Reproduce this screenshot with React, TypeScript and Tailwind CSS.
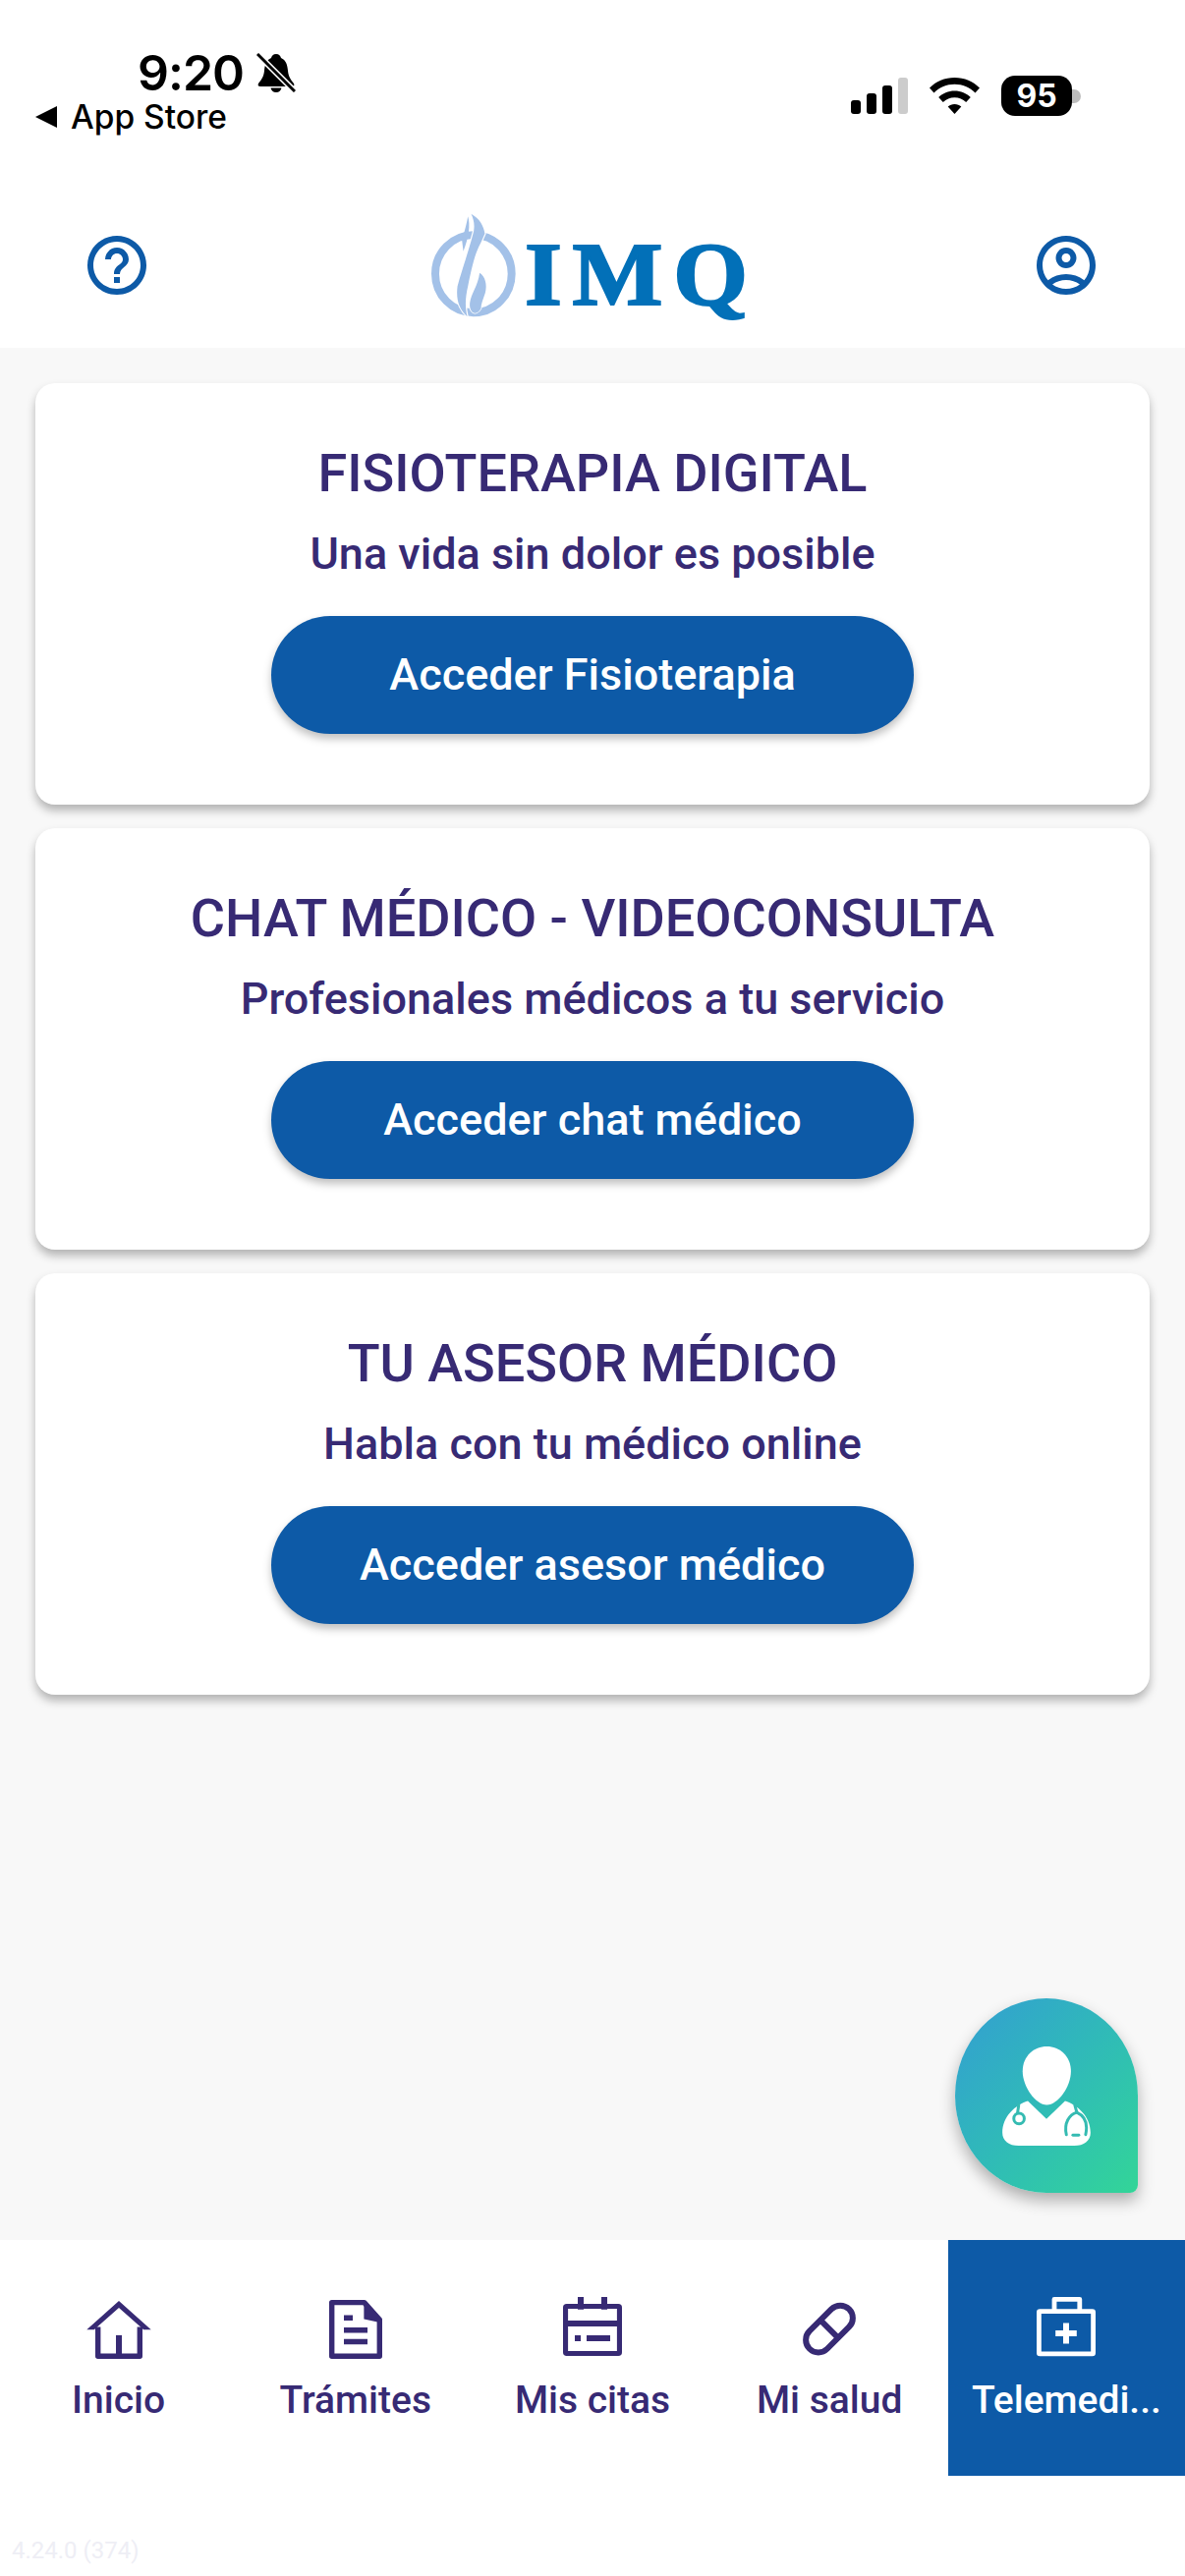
import { MdHelpOutline, MdOutlineAccountCircle } from 'react-icons/md';

const CARDS = [
  { title: 'FISIOTERAPIA DIGITAL', subtitle: 'Una vida sin dolor es posible', action: 'Acceder Fisioterapia' },
  { title: 'CHAT MÉDICO - VIDEOCONSULTA', subtitle: 'Profesionales médicos a tu servicio', action: 'Acceder chat médico' },
  { title: 'TU ASESOR MÉDICO', subtitle: 'Habla con tu médico online', action: 'Acceder asesor médico' },
];

function HomeIcon() {
  return (
    <svg viewBox="0 0 24 24" className="w-[72px] h-[72px]" fill="none" stroke="currentColor" strokeWidth="1.8">
      <path d="M12 2.7 22.9 12.4H20.4L12 5 3.6 12.4H1.1Z" fill="currentColor" stroke="none" />
      <path d="M4.9 11.5V21.4H19.1V11.5" strokeLinejoin="round" />
      <path d="M12 14.3V21" strokeWidth="2" />
    </svg>
  );
}

function DocIcon() {
  return (
    <svg viewBox="0 0 24 24" className="w-[72px] h-[72px]" fill="none" stroke="currentColor" strokeWidth="1.8">
      <path d="M3.9 3.2H14.9L20.1 9V21.4H3.9Z" strokeLinejoin="round" />
      <path d="M14.8 2.6 21 9.1V10.2L14.8 8.8Z" fill="currentColor" stroke="none" />
      <path d="M8 7.5H11V9.3H8ZM8 11.7H16V13.5H8ZM8 15.6H16V17.4H8Z" fill="currentColor" stroke="none" />
    </svg>
  );
}

function CalendarIcon() {
  return (
    <svg viewBox="0 0 24 24" className="w-[72px] h-[72px]" fill="none" stroke="currentColor" strokeWidth="1.7">
      <rect x="2.85" y="4.5" width="18.3" height="16" rx="0.4" />
      <path d="M8 1.3V5.6M16 1.3V5.6" strokeWidth="2" />
      <path d="M2.5 10.3H21.5" strokeWidth="2" />
      <path d="M6 14.3H8V16.3H6ZM10 14.3H18V16.3H10Z" fill="currentColor" stroke="none" />
    </svg>
  );
}

function PillIcon() {
  return (
    <svg viewBox="0 0 24 24" className="w-[72px] h-[72px]" fill="none" stroke="currentColor" strokeWidth="2">
      <rect x="2.5" y="7.95" width="19" height="8.5" rx="4.25" transform="rotate(-45 12 12.2)" />
      <path d="M9 9.2 15 15.2" />
    </svg>
  );
}

function KitIcon() {
  return (
    <svg viewBox="0 0 24 24" className="w-[72px] h-[72px]" fill="none" stroke="currentColor" strokeWidth="1.6">
      <rect x="2.8" y="6.2" width="18.4" height="14.4" rx="0.3" strokeLinejoin="round" />
      <path d="M8 6V2.1H16.6V6" strokeLinejoin="round" />
      <path d="M12 10.2V17.2M8.4 13.7H15.6" strokeWidth="2" />
    </svg>
  );
}

const TABS = [
  { label: 'Inicio', icon: <HomeIcon /> },
  { label: 'Trámites', icon: <DocIcon /> },
  { label: 'Mis citas', icon: <CalendarIcon /> },
  { label: 'Mi salud', icon: <PillIcon /> },
  { label: 'Telemedi...', icon: <KitIcon />, active: true },
];

function ImqMark() {
  return (
    <svg viewBox="110 70 265 330" className="w-[88px] h-[110px] shrink-0">
      <ellipse cx="239" cy="261" rx="117" ry="119" fill="none" stroke="#a3c1e8" strokeWidth="24" />
      <path d="M222 85C230 110 225 150 208 192L204 160C208 140 216 120 222 85Z" fill="#a3c1e8" />
      <path
        d="M232 78C258 92 270 115 274 138L262 165C245 195 235 235 222 300C215 330 212 360 220 392C195 370 185 340 190 300C200 260 225 190 240 130C243 110 240 95 232 78Z"
        fill="#a3c1e8"
        stroke="#ffffff"
        strokeWidth="7"
        paintOrder="stroke"
      />
      <path
        d="M258 258C275 268 282 295 275 320C268 340 262 355 262 368C245 395 225 378 228 350C232 320 252 300 258 258Z"
        fill="#a3c1e8"
        stroke="#ffffff"
        strokeWidth="5"
        paintOrder="stroke"
      />
    </svg>
  );
}

function DoctorIcon() {
  return (
    <svg viewBox="240 216 270 304" className="w-[90px] h-[101px]">
      <path d="M376 216C415 216 450 245 450 292C450 340 410 395 376 395C342 395 302 340 302 292C302 245 337 216 376 216Z" fill="#ffffff" />
      <path d="M318 383 375 438 432 383C470 395 510 430 510 480C510 505 490 520 460 520H290C260 520 240 505 240 480C240 430 280 395 318 383Z" fill="#ffffff" />
      <g fill="none" stroke="#35bbb2" strokeWidth="9" strokeLinecap="round">
        <path d="M290 396 286 422" />
        <circle cx="291" cy="437" r="16" fill="#ffffff" />
        <path d="M462 396 468 418C445 425 428 450 436 486" />
        <path d="M468 418C490 428 503 450 495 486" />
        <path d="M456 488H474" />
      </g>
    </svg>
  );
}

function MutedBell() {
  return (
    <svg viewBox="0 0 40 40" className="ml-[13px] w-[40px] h-[40px]">
      <path d="M20 1C23 1 24.5 3 25 5C30 7 31.5 12 32 18C32.5 24 35 27 38 31C39 33 38 34 36 34H4C2 34 1 33 2 31C5 27 7.5 24 8 18C8.5 12 10 7 15 5C15.5 3 17 1 20 1Z" fill="#000" />
      <path d="M14.5 35.5H25.5C25 38 23 40 20 40S15 38 14.5 35.5Z" fill="#000" />
      <path d="M1 1 39 39" stroke="#fff" strokeWidth="6" />
      <path d="M1 1 39 39" stroke="#000" strokeWidth="3" />
    </svg>
  );
}

function StatusBar() {
  return (
    <div className="flex justify-between h-[150px] pt-[50px] pl-[36px] pr-[106px]">
      <div className="flex flex-col">
        <div className="flex items-center pl-[104px] h-[50px] -mt-[1px] font-['Inter',sans-serif] font-semibold text-[50px] tracking-[-1px] text-black">
          <span>9:20</span>
          <MutedBell />
        </div>
        <div className="flex items-center h-[40px] font-['Inter',sans-serif] font-medium text-[33.5px] text-black">
          <span className="w-0 h-0 border-y-[11px] border-y-transparent border-r-[22px] border-r-black" />
          <span className="ml-[14px]">App Store</span>
        </div>
      </div>
      <div className="flex items-center h-[41px] mt-[27px]">
        <svg viewBox="0 0 58 37" className="w-[58px] h-[37px]">
          <rect x="0" y="23" width="10" height="14" rx="3" fill="#000" />
          <rect x="16" y="16" width="10" height="21" rx="3" fill="#000" />
          <rect x="32" y="8" width="10" height="29" rx="3" fill="#000" />
          <rect x="48" y="0" width="10" height="37" rx="3" fill="#cccccc" />
        </svg>
        <svg viewBox="0 0 51 37" className="w-[51px] h-[37px] ml-[22px]">
          <path d="M25.5 0C35.5 0 44.5 4 51 10.5L46.5 15.5C41 10 33.5 6.7 25.5 6.7S10 10 4.5 15.5L0 10.5C6.5 4 15.5 0 25.5 0Z" fill="#000" />
          <path d="M25.5 13.5C32 13.5 37.5 16 41.8 20L37.2 25C34 22 30 20.3 25.5 20.3S17 22 13.8 25L9.2 20C13.5 16 19 13.5 25.5 13.5Z" fill="#000" />
          <path d="M25.5 27C28.2 27 30.5 28 32.3 29.6L25.5 37 18.7 29.6C20.5 28 22.8 27 25.5 27Z" fill="#000" />
        </svg>
        <div className="flex items-center ml-[22px]">
          <div className="w-[72px] h-[41px] rounded-[14px] bg-black flex items-center justify-center font-['Inter',sans-serif] font-bold text-[32px] leading-none text-white">
            95
          </div>
          <div className="w-[9px] h-[14px] rounded-r-full bg-[#bdbdbd]" />
        </div>
      </div>
    </div>
  );
}

export default function App() {
  return (
    <div className="relative flex flex-col w-[1206px] h-[2622px] bg-white font-['Roboto',sans-serif] overflow-hidden">
      <StatusBar />
      <div className="flex items-center justify-between h-[204px] pl-[83px] pr-[85px] pt-[36px] text-[#0d5aa7]">
        <MdHelpOutline className="w-[72px] h-[72px]" />
        <div className="flex items-center -ml-[9px]">
          <ImqMark />
          <span className="ml-[7px] mt-[18px] origin-left scale-x-[1.07] font-['Liberation_Serif',serif] font-bold text-[91px] leading-none tracking-[10px] text-[#0270b8] [-webkit-text-stroke:2px_#0270b8]">
            IMQ
          </span>
        </div>
        <MdOutlineAccountCircle className="w-[72px] h-[72px]" />
      </div>

      <main className="flex-1 flex flex-col gap-[24px] p-[36px] bg-[#f8f8f8]">
        {CARDS.map((card) => (
          <section
            key={card.title}
            className="flex flex-col items-center bg-white rounded-[20px] pt-[60px] pb-[72px] shadow-[0_6px_10px_rgba(0,0,0,0.28)] text-[#372a74]"
          >
            <h2 className="text-[54px] leading-[64px] font-medium">{card.title}</h2>
            <p className="mt-[22px] text-[45px] leading-[56px] font-medium">{card.subtitle}</p>
            <button className="mt-[35px] w-[654px] h-[120px] rounded-[60px] bg-[#0d5aa7] text-white text-[45px] font-medium shadow-[0_5px_8px_rgba(0,0,0,0.25)]">
              {card.action}
            </button>
          </section>
        ))}
      </main>

      <nav className="grid grid-cols-5 h-[240px] bg-white">
        {TABS.map((tab) => (
          <div
            key={tab.label}
            className={`flex flex-col items-center min-w-0 pt-[54px] ${tab.active ? 'bg-[#0d5aa7] text-white' : 'text-[#372a74]'}`}
          >
            {tab.icon}
            <span className="mt-[14px] whitespace-nowrap text-[39px] leading-[46px] font-medium">{tab.label}</span>
          </div>
        ))}
      </nav>

      <footer className="h-[102px] pl-[12px] pt-[61px] text-[24px] leading-[30px] text-[#eeeef5]">4.24.0 (374)</footer>

      <button className="absolute left-[972px] top-[2034px] w-[186px] h-[198px] flex items-center justify-center rounded-[50%_50%_8px_50%] bg-gradient-to-br from-[#349dd2] to-[#33d597] shadow-[0_8px_16px_rgba(0,0,0,0.3)]">
        <DoctorIcon />
      </button>
    </div>
  );
}
